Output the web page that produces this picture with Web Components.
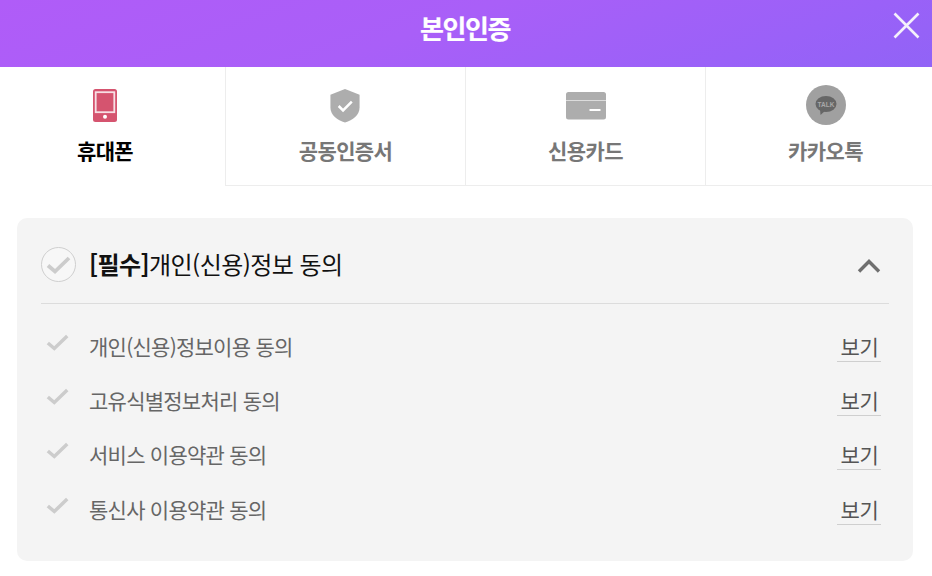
<!DOCTYPE html>
<html lang="ko"><head><meta charset="utf-8"><title>본인인증</title>
<style>
html,body{margin:0;padding:0;background:#fff;overflow:hidden}
body{width:932px;height:576px;font-family:"Noto Sans CJK KR","Noto Sans",sans-serif}
</style></head><body>
<auth-page></auth-page>
<script>
function def(name, html){
  customElements.define(name, class extends HTMLElement{
    constructor(){super();this.attachShadow({mode:'open'}).innerHTML=html;}
  });
}
const CHECK='<svg width="26" height="20" viewBox="0 0 26 20"><path d="M2 10.5 L9 16.5 L23 3" fill="none" stroke="#cccccc" stroke-width="3.8"/></svg>';
def('auth-header',`<style>
:host{display:flex;height:67px;align-items:center;justify-content:center;position:relative;
background:linear-gradient(160deg,#b05cf8 0%,#a95ff8 45%,#9a61f8 80%,#9163f6 100%);color:#fff}
.t{font-size:26px;font-weight:700;letter-spacing:-1.45px;line-height:1;margin:-12px 2px 0 0;-webkit-text-stroke:.2px #fff}
svg{position:absolute;left:893px;top:12px}
</style><span class="t"><slot></slot></span>
<svg width="27" height="27" viewBox="0 0 27 27"><path d="M1.5 1.5 25.5 25.5M25.5 1.5 1.5 25.5" stroke="#f4f0fb" stroke-width="2.6" fill="none"/></svg>`);
def('auth-tab',`<style>
:host{display:flex;flex-direction:column;align-items:center;box-sizing:border-box;height:119px;width:240px;flex:none;
border-left:1px solid #ededed;border-bottom:1px solid #ededed;color:#777}
:host([active]){border:0;color:#000}
.i{height:40px;margin-top:18px;display:flex;align-items:center;justify-content:center}
.l{font-size:21px;font-weight:700;letter-spacing:-.6px;line-height:30px;margin-top:10px}
</style><div class="i"><slot name="icon"></slot></div><div class="l"><slot></slot></div>`);
def('auth-tabs',`<style>:host{display:flex;margin-left:-15px}</style><slot></slot>`);
def('agree-panel',`<style>
:host{display:block;box-sizing:border-box;width:896px;height:343px;margin:32px 0 0 17px;padding:0 24px;background:#f4f4f4;border-radius:10px}
.h{display:flex;align-items:center;height:86px;padding-top:7px;border-bottom:1px solid #dcdcdc;box-sizing:border-box}
.c{width:35px;height:35px;box-sizing:border-box;border:1px solid #cfcfcf;border-radius:50%;display:flex;align-items:center;justify-content:center;flex:none;background:#f7f7f7}
.c svg{margin-top:2px}
.tt{margin-left:13px;font-size:24px;letter-spacing:-.56px;color:#111;line-height:34px;flex:1}
::slotted(b){font-weight:700;color:#000}
.ch{margin-right:8px;margin-top:3px}
.b{padding-top:17px;display:flex;flex-direction:column}
</style>
<div class="h"><span class="c">${CHECK}</span><span class="tt"><slot name="title"></slot></span>
<svg class="ch" width="24" height="16" viewBox="0 0 24 16"><path d="M2 13.5 12 3.5 22 13.5" fill="none" stroke="#6f6f6f" stroke-width="3.4"/></svg></div>
<div class="b"><slot></slot></div>`);
def('agree-row',`<style>
:host{display:flex;align-items:flex-start;height:54.2px;color:#666;font-size:21px;letter-spacing:-.75px;line-height:28px}
svg{flex:none;margin:12px 0 0 5px;width:24px;height:19px}
.t{margin-left:19px;flex:1;padding-top:11px}
.v{margin-top:11px;width:44px;height:30px;padding-left:1px;box-sizing:border-box;border-bottom:1px solid #cfcfcf;text-align:center;font-size:21px;letter-spacing:-.4px;color:#555;margin-right:8px}
</style>${CHECK}<span class="t"><slot></slot></span><span class="v">보기</span>`);
def('auth-page',`<style>:host{display:block;width:932px;overflow:hidden}</style>
<auth-header>본인인증</auth-header>
<auth-tabs>
<auth-tab active><svg slot="icon" width="24" height="33" viewBox="0 0 24 33"><rect width="24" height="33" rx="2.5" fill="#d5546f"/><rect x="2.7" y="3.2" width="18.6" height="20" fill="#d5546f" stroke="#f7dfe4" stroke-width="1.8"/><circle cx="12" cy="27.7" r="2" fill="#fff"/></svg>휴대폰</auth-tab>
<auth-tab><svg slot="icon" style="margin:2px 1px 0 0" width="30" height="34" viewBox="0 0 30 35"><path d="M15 0 30 6V19C30 27 23 32 15 34.5 7 32 0 27 0 19V6Z" fill="#adadad"/><path d="M8.5 17.5 13 22 22 13" fill="none" stroke="#fff" stroke-width="2.6"/></svg>공동인증서</auth-tab>
<auth-tab><svg slot="icon" style="margin-top:1px" width="40" height="28" viewBox="0 0 40 28"><path d="M2.5 0H37.5A2.5 2.5 0 0 1 40 2.500V8H0V2.500A2.500 2.500 0 0 1 2.500 0ZM0 9H40V25A2.500 2.500 0 0 1 37.500 27.500H2.500A2.500 2.500 0 0 1 0 25Z" fill="#adadad"/><rect y="8" width="40" height="1" fill="#dcdcdc"/><rect x="23.500" y="17" width="11" height="2" fill="#fff"/></svg>신용카드</auth-tab>
<auth-tab><svg slot="icon" width="40" height="40" viewBox="0 0 40 40"><circle cx="20" cy="20" r="20" fill="#a0a0a0"/><ellipse cx="20" cy="19" rx="10.500" ry="8" fill="#666"/><path d="M14 24 14.500 30 20 25Z" fill="#666"/><text x="20" y="21.500" text-anchor="middle" font-family="Liberation Sans" font-size="6.500" font-weight="700" fill="#a8a8a8">TALK</text></svg>카카오톡</auth-tab>
</auth-tabs>
<agree-panel><span slot="title"><b>[필수]</b>개인(신용)정보 동의</span>
<agree-row>개인(신용)정보이용 동의</agree-row>
<agree-row>고유식별정보처리 동의</agree-row>
<agree-row>서비스 이용약관 동의</agree-row>
<agree-row>통신사 이용약관 동의</agree-row>
</agree-panel>`);
</script></body></html>
